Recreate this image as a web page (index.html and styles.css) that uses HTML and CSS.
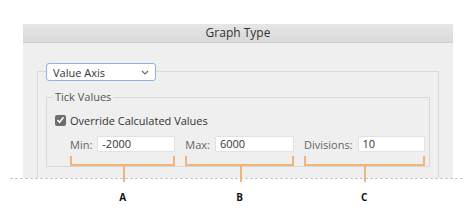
FILE: index.html
```html
<!DOCTYPE html>
<html lang="en">
<head>
    <meta charset="UTF-8">
    <title>Graph Type</title>
    <link rel="stylesheet" href="styles.css">
</head>
<body>
    <div class="dialog">
        <div class="titlebar">Graph Type</div>
        <div class="dialog-body">
            <div class="axis-box">
                <div class="select">
                    <span>Value Axis</span>
                    <svg width="8" height="5" viewBox="0 0 8 5"><path d="M1 1l3 3 3-3" fill="none" stroke="#666" stroke-width="1.1"/></svg>
                </div>
                <div class="tick-values">
                    <span class="legend">Tick Values</span>
                    <label class="check">
                        <span class="box"><svg width="9" height="8" viewBox="0 0 9 8"><path d="M1.5 4l2 2.2 4-5" fill="none" stroke="#fff" stroke-width="1.6"/></svg></span>
                        Override Calculated Values
                    </label>
                    <div class="fields">
                        <div class="field">
                            <div class="field-row"><span class="label">Min:</span><span class="input w-min">-2000</span></div>
                            <div class="bracket"><span class="callout">A</span></div>
                        </div>
                        <div class="field">
                            <div class="field-row"><span class="label">Max:</span><span class="input w-max">6000</span></div>
                            <div class="bracket"><span class="callout">B</span></div>
                        </div>
                        <div class="field">
                            <div class="field-row"><span class="label">Divisions:</span><span class="input w-div">10</span></div>
                            <div class="bracket"><span class="callout">C</span></div>
                        </div>
                    </div>
                </div>
            </div>
        </div>
    </div>
    <div class="cut"></div>
</body>
</html>
```
FILE: styles.css
```css
html, body {
    height: 100%;
}
body {
    margin: 0;
    padding-top: 24px;
    box-sizing: border-box;
    min-height: 210px;
    background: #fff;
    font-family: "Open Sans", Arial, sans-serif;
    font-size: 11px;
    color: #444;
}
.dialog {
    margin-left: 23px;
    width: 430px;
    height: 154px;
    background: #efefef;
    display: flex;
    flex-direction: column;
}
.titlebar {
    height: 18px;
    line-height: 18px;
    text-align: center;
    font-size: 12px;
    color: #333;
    background: linear-gradient(#e6e6e6, #d9d9d9);
    border-bottom: 1px solid #cfcfcf;
}
.dialog-body {
    flex: 1;
    display: flex;
    flex-direction: column;
    padding: 0 14px;
}
.axis-box {
    flex: 1;
    margin-top: 28px;
    padding: 0 8px;
    border: 1px solid #dadada;
    border-bottom: none;
}
.select {
    margin-top: -9px;
    width: 96px;
    height: 16px;
    padding: 0 6px;
    background: #fff;
    border: 1px solid #8fb2e3;
    border-radius: 3px;
    display: flex;
    align-items: center;
    justify-content: space-between;
    font-size: 11px;
    color: #333;
}
.tick-values {
    margin-top: 16px;
    padding: 0 8px;
    border: 1px solid #d8d8d8;
    display: flex;
    flex-direction: column;
    align-items: flex-start;
}
.legend {
    margin: -8px 0 0 -2px;
    padding: 0 2px;
    line-height: 14px;
    background: #efefef;
    color: #555;
}
.check {
    margin-top: 9px;
    height: 14px;
    display: flex;
    align-items: center;
    gap: 4px;
    color: #333;
}
.box {
    width: 11px;
    height: 11px;
    border-radius: 2px;
    background: #6d6d6d;
    display: flex;
    align-items: center;
    justify-content: center;
}
.fields {
    margin-top: 9px;
    padding-left: 15px;
    display: flex;
    gap: 10px;
}
.field-row {
    display: flex;
    align-items: center;
    gap: 5px;
}
.label {
    color: #666;
}
.input {
    height: 16px;
    line-height: 14px;
    padding-left: 4px;
    box-sizing: border-box;
    background: #fff;
    border: 1px solid #e2e2e2;
    border-radius: 2px;
    color: #333;
}
.w-min { width: 78px; }
.w-max { width: 79px; }
.w-div { width: 67px; }
.bracket {
    position: relative;
    margin-top: 4px;
    height: 8px;
    border: 2px solid #f3b47b;
    border-top: none;
}
.bracket::before {
    content: "";
    position: absolute;
    left: 50%;
    top: 100%;
    width: 2px;
    height: 18px;
    background: #f3b47b;
}
.callout {
    position: absolute;
    left: 50%;
    top: 34px;
    transform: translateX(-50%);
    font-size: 10px;
    font-weight: bold;
    color: #111;
}
.cut {
    margin-left: 10px;
    width: 453px;
    border-top: 1px dashed #c8c8c8;
}
```
